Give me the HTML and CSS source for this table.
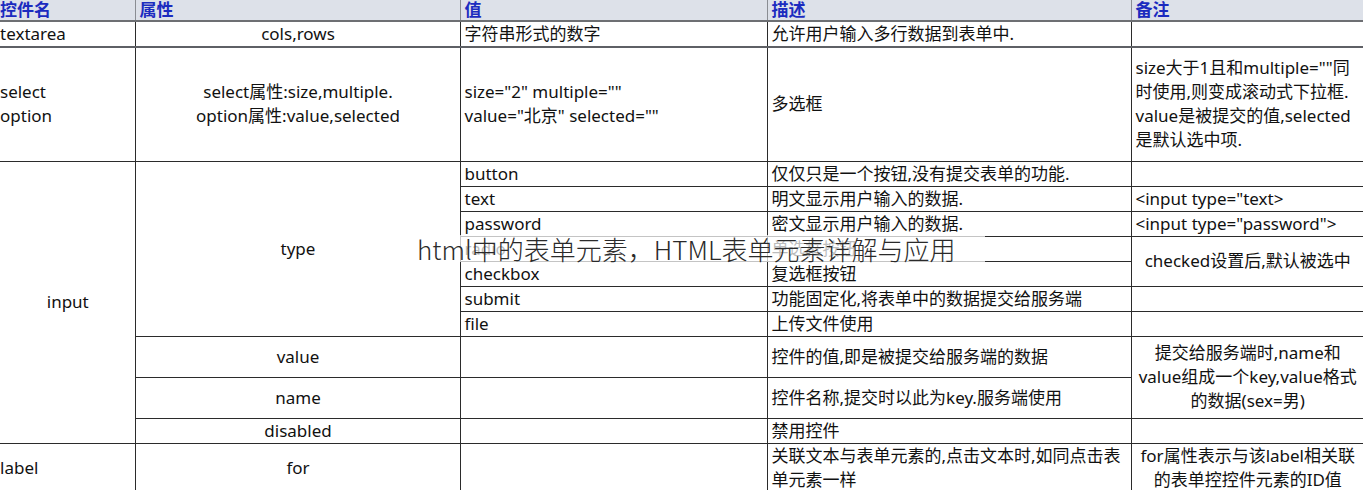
FILE: index.html
```html
<!DOCTYPE html>
<html lang="zh-CN">
<head>
<meta charset="utf-8">
<title>html中的表单元素</title>
<link rel="stylesheet" href="styles.css">
</head>
<body>
<div class="page">
<table class="grid">
  <colgroup>
    <col class="c1"><col class="c2"><col class="c3"><col class="c4"><col class="c5">
  </colgroup>
  <thead>
    <tr class="r-head"><th>控件名</th><th>属性</th><th>值</th><th>描述</th><th>备注</th></tr>
  </thead>
  <tbody>
    <tr class="r-26 thick-bottom">
      <td class="left">textarea</td>
      <td class="center">cols,rows</td>
      <td>字符串形式的数字</td>
      <td>允许用户输入多行数据到表单中.</td>
      <td></td>
    </tr>
    <tr class="r-114">
      <td class="left">select<br>option</td>
      <td class="center">select属性:size,multiple.<br>option属性:value,selected</td>
      <td>size="2" multiple=""<br>value="北京" selected=""</td>
      <td>多选框</td>
      <td>size大于1且和multiple=""同<br>时使用,则变成滚动式下拉框.<br>value是被提交的值,selected<br>是默认选中项.</td>
    </tr>
    <tr class="r-25">
      <td class="center" rowspan="10">input</td>
      <td class="center" rowspan="7">type</td>
      <td>button</td>
      <td>仅仅只是一个按钮,没有提交表单的功能.</td>
      <td></td>
    </tr>
    <tr class="r-25"><td>text</td><td>明文显示用户输入的数据.</td><td>&lt;input type="text&gt;</td></tr>
    <tr class="r-25"><td>password</td><td>密文显示用户输入的数据.</td><td>&lt;input type="password"&gt;</td></tr>
    <tr class="r-25"><td>radio</td><td>单选框按钮</td><td class="center" rowspan="2">checked设置后,默认被选中</td></tr>
    <tr class="r-25"><td>checkbox</td><td>复选框按钮</td></tr>
    <tr class="r-25"><td>submit</td><td>功能固定化,将表单中的数据提交给服务端</td><td></td></tr>
    <tr class="r-25"><td>file</td><td>上传文件使用</td><td></td></tr>
    <tr class="r-41">
      <td class="center">value</td>
      <td></td>
      <td>控件的值,即是被提交给服务端的数据</td>
      <td class="center" rowspan="2">提交给服务端时,name和<br>value组成一个key,value格式<br>的数据(sex=男)</td>
    </tr>
    <tr class="r-41"><td class="center">name</td><td></td><td>控件名称,提交时以此为key.服务端使用</td></tr>
    <tr class="r-25"><td class="center">disabled</td><td></td><td>禁用控件</td><td></td></tr>
    <tr class="r-50">
      <td class="left">label</td>
      <td class="center">for</td>
      <td></td>
      <td>关联文本与表单元素的,点击文本时,如同点击表<br>单元素一样</td>
      <td class="center">for属性表示与该label相关联<br>的表单控控件元素的ID值</td>
    </tr>
  </tbody>
</table>
<div class="banner">html中的表单元素，HTML表单元素详解与应用</div>
</div>
</body>
</html>
```

FILE: styles.css
```css
html, body {
  margin: 0;
  padding: 0;
  background: #ffffff;
}

.page {
  position: relative;
  width: 1363px;
  height: 490px;
  overflow: hidden;
}

.grid {
  border-collapse: collapse;
  table-layout: fixed;
  width: 1363px;
  font-family: "Noto Sans", "Noto Sans CJK SC", sans-serif;
  font-size: 17px;
  line-height: 24px;
  color: #111;
}

.c1 { width: 135px; }
.c2 { width: 325px; }
.c3 { width: 307px; }
.c4 { width: 364px; }
.c5 { width: 232px; }

.grid th,
.grid td {
  border: 1px solid #2b2b2b;
  padding: 0 3px 0 4px;
  vertical-align: middle;
  text-align: left;
  white-space: nowrap;
}

.grid tr > :first-child { border-left: none; }
.grid tr > :last-child { border-right: none; }
.grid thead th { border-top: none; }

.grid th {
  background: #dde1e9;
  color: #1b2bbf;
  font-weight: bold;
  font-size: 17px;
  line-height: 20px;
  border-left-color: #8a8d93;
  border-right-color: #8a8d93;
  border-bottom: 2px solid #6d6f73;
}

.grid th:first-child { padding-left: 0; }

.r-head { height: 21px; }
.r-25 { height: 25px; }
.r-26 { height: 26px; }
.r-41 { height: 41px; }
.r-50 { height: 50px; }
.r-114 { height: 114px; }

.thick-bottom > td { border-bottom: 2px solid #5e6065; }

.grid td.left { padding-left: 0; }
.grid td.center { text-align: center; }

.banner {
  position: absolute;
  left: 415px;
  top: 235px;
  width: 570px;
  height: 27px;
  background: rgba(255, 255, 255, 0.72);
  font-family: "Noto Sans CJK SC", "Noto Sans", sans-serif;
  font-weight: 300;
  font-size: 26px;
  line-height: 27px;
  color: #2a2a2a;
  padding-left: 2px;
  box-sizing: border-box;
  white-space: nowrap;
}
```
